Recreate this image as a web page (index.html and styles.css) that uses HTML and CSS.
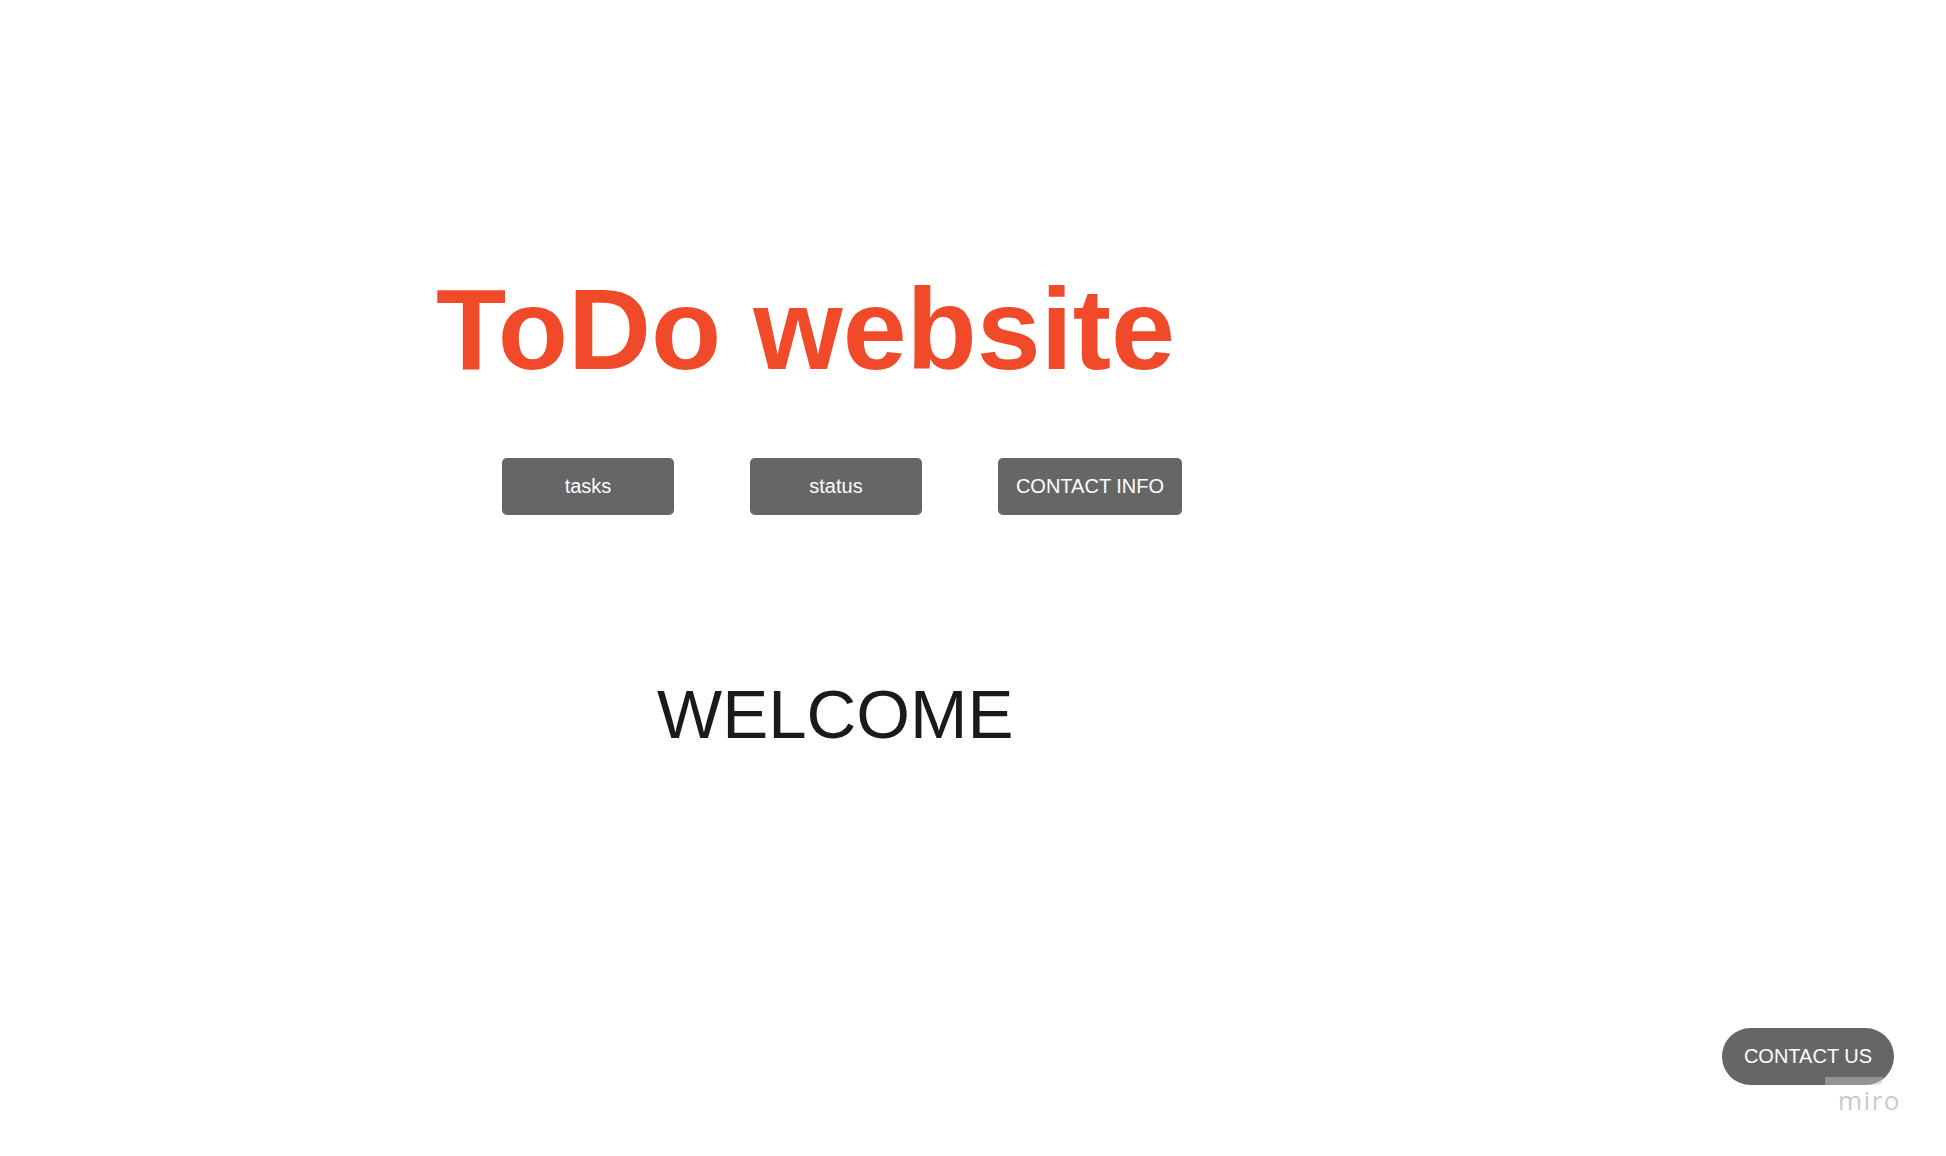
FILE: index.html
```html
<!DOCTYPE html>
<html lang="en">
<head>
<meta charset="utf-8">
<title>ToDo website</title>
<link rel="stylesheet" href="styles.css">
</head>
<body>
<main class="page">
  <h1 class="title">ToDo website</h1>
  <nav class="nav">
    <a class="nav-btn btn-tasks" href="#">tasks</a>
    <a class="nav-btn btn-status" href="#">status</a>
    <a class="nav-btn btn-contact" href="#">CONTACT INFO</a>
  </nav>
  <p class="welcome">WELCOME</p>
</main>
<a class="contact-us" href="#">CONTACT US</a>
<div class="miro-bar"></div>
<div class="miro">miro</div>
</body>
</html>
```
FILE: styles.css
```css
html, body {
  margin: 0;
  padding: 0;
  background: #ffffff;
}
body {
  width: 1946px;
  height: 1156px;
  overflow: hidden;
  font-family: "Liberation Sans", Arial, sans-serif;
}
.page {
  display: flex;
  flex-direction: column;
  align-items: flex-start;
  padding-top: 272px;
}
.title {
  margin: 0 0 0 436px;
  font-size: 115px;
  line-height: 1;
  font-weight: 700;
  color: #f04a2a;
}
.nav {
  display: flex;
  gap: 76px;
  margin: 71px 0 0 502px;
}
.nav-btn {
  display: flex;
  align-items: center;
  justify-content: center;
  height: 57px;
  background: #666666;
  color: #ffffff;
  text-decoration: none;
  font-size: 20px;
  border-radius: 5px;
}
.btn-tasks, .btn-status {
  width: 172px;
}
.btn-contact {
  width: 184px;
}
.welcome {
  margin: 165px 0 0 657px;
  font-size: 69px;
  line-height: 1;
  color: #1a1a1a;
}
.contact-us {
  position: absolute;
  left: 1722px;
  top: 1028px;
  width: 172px;
  height: 57px;
  border-radius: 29px;
  background: #666666;
  color: #ffffff;
  text-decoration: none;
  font-size: 20px;
  display: flex;
  align-items: center;
  justify-content: center;
}
.miro-bar {
  position: absolute;
  left: 1825px;
  top: 1077px;
  width: 58px;
  height: 8px;
  background: rgba(190, 190, 200, 0.5);
  border-bottom-right-radius: 6px;
}
.miro {
  position: absolute;
  left: 1838px;
  top: 1084px;
  font-family: "Open Sans", sans-serif;
  font-size: 26px;
  line-height: 32px;
  letter-spacing: 1.5px;
  color: #c9c9d6;
}
```
